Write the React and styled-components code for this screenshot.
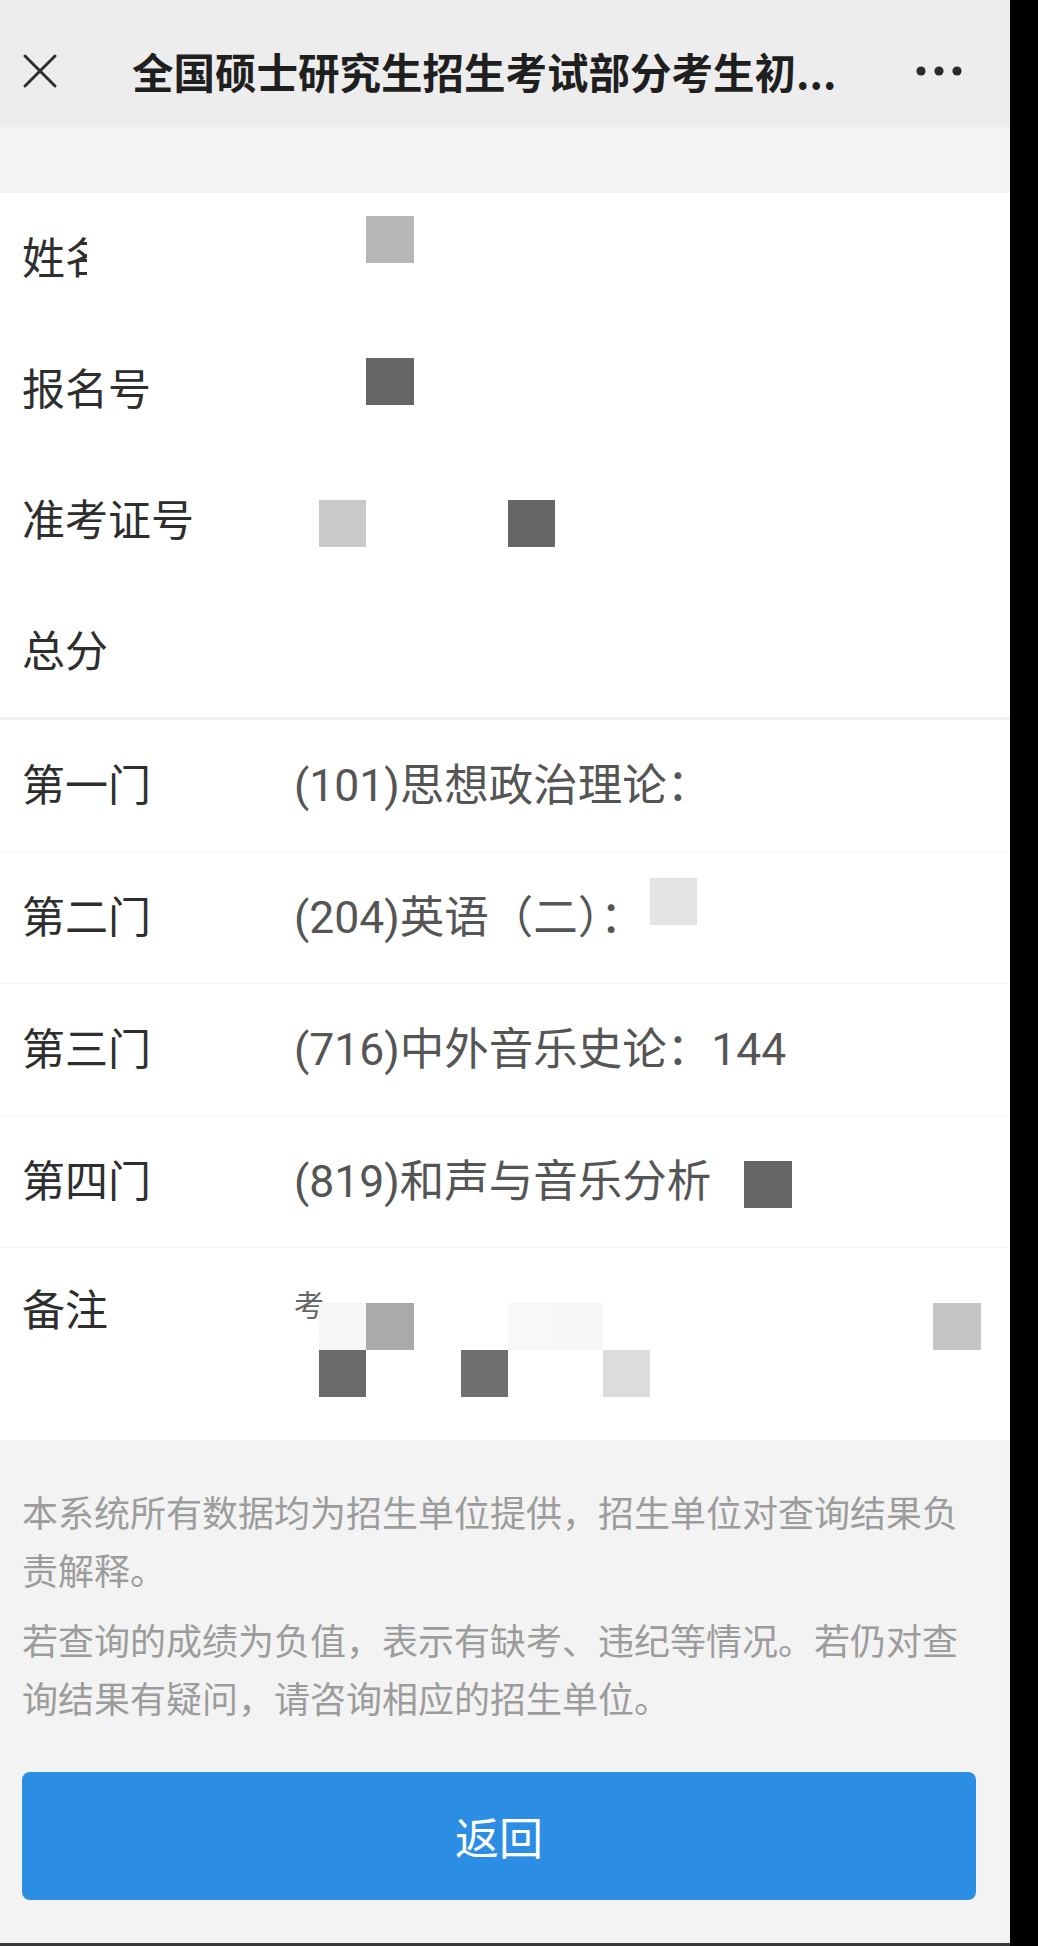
import React from "react"
import styled, { createGlobalStyle } from "styled-components"

const GlobalStyle = createGlobalStyle`
  html, body {
    margin: 0;
    padding: 0;
    background: #000;
  }
  body {
    font-family: Roboto, "Noto Sans CJK SC", "Noto Sans", sans-serif;
  }
`

const basicInfo = [
  { label: "姓名", masked: true },
  { label: "报名号" },
  { label: "准考证号" },
  { label: "总分" },
]

const subjects = [
  { label: "第一门", value: "(101)思想政治理论：" },
  { label: "第二门", value: "(204)英语（二）：" },
  { label: "第三门", value: "(716)中外音乐史论：144" },
  { label: "第四门", value: "(819)和声与音乐分析" },
]

/* censor blocks from the screenshot, on a 47.25px grid */
const mosaic = [
  { col: 1, row: 0, color: "#b6b6b6" },
  { col: 1, row: 3, color: "#666666" },
  { col: 0, row: 6, color: "#c9c9c9" },
  { col: 4, row: 6, color: "#666666" },
  { col: 7, row: 14, color: "#e3e3e3" },
  { col: 9, row: 20, color: "#676767" },
  { col: 0, row: 23, color: "#f6f6f6" },
  { col: 1, row: 23, color: "#aaaaaa" },
  { col: 4, row: 23, color: "#f8f8f8" },
  { col: 5, row: 23, color: "#f6f6f6" },
  { col: 13, row: 23, color: "#c4c4c4" },
  { col: 0, row: 24, color: "#6a6a6a" },
  { col: 3, row: 24, color: "#707070" },
  { col: 6, row: 24, color: "#dcdcdc" },
]

const CloseIcon = () => (
  <svg width="36" height="36" viewBox="0 0 36 36">
    <path d="M3 3 L33 33 M33 3 L3 33" stroke="#2e2e2e" strokeWidth="3" strokeLinecap="round" />
  </svg>
)

const MoreIcon = () => (
  <svg width="46" height="10" viewBox="0 0 46 10">
    <circle cx="5" cy="5" r="4.6" fill="#2b2b2b" />
    <circle cx="23" cy="5" r="4.6" fill="#2b2b2b" />
    <circle cx="41" cy="5" r="4.6" fill="#2b2b2b" />
  </svg>
)

export default function App() {
  return (
    <Page>
      <GlobalStyle />
      <Header>
        <CloseIcon />
        <Title>全国硕士研究生招生考试部分考生初...</Title>
        <MoreIcon />
      </Header>
      <Band />

      <Section $divider>
        {basicInfo.map(item => (
          <Row key={item.label} $h={131}>
            <Label $masked={item.masked}>{item.label}</Label>
          </Row>
        ))}
      </Section>

      <Section>
        {subjects.map(item => (
          <Row key={item.label} $h={132} $line>
            <Label>{item.label}</Label>
            <Value>{item.value}</Value>
          </Row>
        ))}
        <NoteRow>
          <Label>备注</Label>
          <NoteValue>考</NoteValue>
        </NoteRow>
      </Section>

      <Footer>
        <Notice>本系统所有数据均为招生单位提供，招生单位对查询结果负责解释。</Notice>
        <Notice>若查询的成绩为负值，表示有缺考、违纪等情况。若仍对查询结果有疑问，请咨询相应的招生单位。</Notice>
        <BackButton>返回</BackButton>
      </Footer>

      <MosaicLayer>
        {mosaic.map((c, i) => (
          <Cell key={i} $col={c.col} $row={c.row} $color={c.color} />
        ))}
      </MosaicLayer>
    </Page>
  )
}

const Page = styled.div`
  position: relative;
  width: 1010px;
  min-height: 1943px;
  background: #f3f3f3;
  border-bottom: 3px solid #3a3a3a;
  display: flex;
  flex-direction: column;
`

const Header = styled.div`
  height: 127px;
  box-sizing: border-box;
  padding: 14px 48px 0 22px;
  background: #ededed;
  display: flex;
  align-items: center;
`

const Title = styled.div`
  flex: 1;
  min-width: 0;
  margin: 0 40px 0 74px;
  font-family: "Noto Sans CJK SC", sans-serif;
  font-size: 41.5px;
  font-weight: 700;
  color: #1f1f1f;
  white-space: nowrap;
`

const Band = styled.div`
  height: 66px;
  background: #f3f3f3;
`

const Section = styled.div`
  background: #fff;
  border-bottom: ${p => (p.$divider ? "3px solid #f0f0f0" : "none")};
`

const Row = styled.div`
  height: ${p => p.$h}px;
  box-sizing: border-box;
  padding-left: 22px;
  display: flex;
  align-items: center;
  border-bottom: ${p => (p.$line ? "1px solid #f7f7f7" : "none")};
`

const Label = styled.div`
  position: relative;
  width: 272px;
  flex: none;
  font-size: 43px;
  line-height: 50px;
  color: #2e2e2e;

  ${p => p.$masked && `
    &::after {
      content: "";
      position: absolute;
      left: 65px;
      top: 0;
      width: 50px;
      height: 100%;
      background: #fff;
    }
  `}
`

const Value = styled.div`
  font-size: 44.5px;
  line-height: 50px;
  color: #555;
  white-space: nowrap;
`

const NoteRow = styled.div`
  height: 192px;
  box-sizing: border-box;
  padding: 38px 0 0 22px;
  display: flex;
  align-items: flex-start;
`

const NoteValue = styled.div`
  font-size: 30px;
  line-height: 40px;
  color: #666;
`

const Footer = styled.div`
  flex: 1;
  padding: 46px 34px 43px 22px;
  display: flex;
  flex-direction: column;
`

const Notice = styled.p`
  margin: 0 0 12px;
  padding-right: 10px;
  font-size: 36px;
  line-height: 58px;
  color: #9c9c9c;
`

const BackButton = styled.button`
  margin-top: 30px;
  height: 128px;
  border: none;
  border-radius: 8px;
  background: #2b8ee4;
  color: #fff;
  font-family: "Noto Sans CJK SC", sans-serif;
  font-size: 44px;
  cursor: pointer;
`

const MosaicLayer = styled.div`
  position: absolute;
  left: 319px;
  top: 216px;
  display: grid;
  grid-template-columns: repeat(14, 47.25px);
  grid-auto-rows: 47.25px;
  pointer-events: none;
`

const Cell = styled.div`
  grid-column: ${p => p.$col + 1};
  grid-row: ${p => p.$row + 1};
  background: ${p => p.$color};
`
